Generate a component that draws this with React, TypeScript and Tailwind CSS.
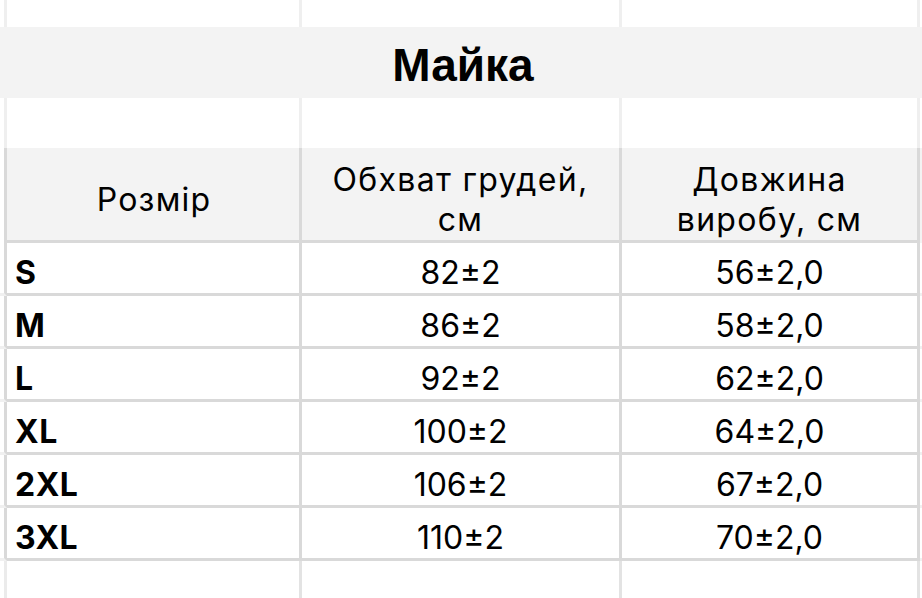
const rows = [
  { size: "S", chest: "82±2", length: "56±2,0" },
  { size: "M", chest: "86±2", length: "58±2,0" },
  { size: "L", chest: "92±2", length: "62±2,0" },
  { size: "XL", chest: "100±2", length: "64±2,0" },
  { size: "2XL", chest: "106±2", length: "67±2,0" },
  { size: "3XL", chest: "110±2", length: "70±2,0" },
];

const cols = "grid grid-cols-[7px_295px_320px_298px_2px]";

function EmptyRow({ h }: { h: string }) {
  return (
    <div className={`${cols} ${h}`}>
      <div className="border-r-[3px] border-[#efefef]" />
      <div className="border-r-[3px] border-[#efefef]" />
      <div className="border-r-[3px] border-[#efefef]" />
      <div className="border-r-[3px] border-[#efefef]" />
      <div />
    </div>
  );
}

export default function App() {
  return (
    <div className="w-[922px] h-[598px] overflow-hidden bg-white text-black font-['Inter',_sans-serif]">
      <EmptyRow h="h-[27px]" />

      <div className="h-[71px] bg-[#f3f3f3] flex items-center justify-center pt-[5px] pl-[4px]">
        <h1 className="font-['Liberation_Sans',_Arial,_sans-serif] font-bold text-[46px] leading-none">Майка</h1>
      </div>

      <EmptyRow h="h-[50px]" />

      <div className={`${cols} h-[95px]`}>
        <div className="border-r-[3px] border-[#d9d9d9]" />
        <div className="bg-[#f3f3f3] border-r-[3px] border-b-[3px] border-[#d9d9d9] flex items-center justify-center text-[32px] leading-[40px] tracking-[1.2px] pt-[11px] pl-[2px]">
          Розмір
        </div>
        <div className="bg-[#f3f3f3] border-r-[3px] border-b-[3px] border-[#d9d9d9] flex items-center justify-center text-center text-[32px] leading-[40px] tracking-[1.3px] pt-[11px]">
          Обхват грудей,
          <br />
          см
        </div>
        <div className="bg-[#f3f3f3] border-r-[3px] border-b-[3px] border-[#d9d9d9] flex items-center justify-center text-center text-[32px] leading-[40px] tracking-[1.3px] pt-[11px]">
          Довжина
          <br />
          виробу, см
        </div>
        <div className="bg-[#f3f3f3]" />
      </div>

      {rows.map((r) => (
        <div key={r.size} className={`${cols} h-[53px]`}>
          <div className="border-r-[3px] border-b-[3px] border-b-[#f0f0f0] border-r-[#d9d9d9]" />
          <div className="border-r-[3px] border-b-[3px] border-[#d9d9d9] flex items-end pl-[8px] text-[32px] font-bold leading-[40px] tracking-[0.5px]">
            {r.size}
          </div>
          <div className="border-r-[3px] border-b-[3px] border-[#d9d9d9] flex items-end justify-center text-[32px] leading-[40px]">
            {r.chest}
          </div>
          <div className="border-r-[3px] border-b-[3px] border-[#d9d9d9] flex items-end justify-center text-[32px] leading-[40px]">
            {r.length}
          </div>
          <div className="border-b-[3px] border-[#f0f0f0]" />
        </div>
      ))}

      <div className={`${cols} h-[37px]`}>
        <div className="border-r-[3px] border-[#ebebeb]" />
        <div className="border-r-[3px] border-[#e3e3e3]" />
        <div className="border-r-[3px] border-[#e3e3e3]" />
        <div className="border-r-[3px] border-[#e3e3e3]" />
        <div />
      </div>
    </div>
  );
}
